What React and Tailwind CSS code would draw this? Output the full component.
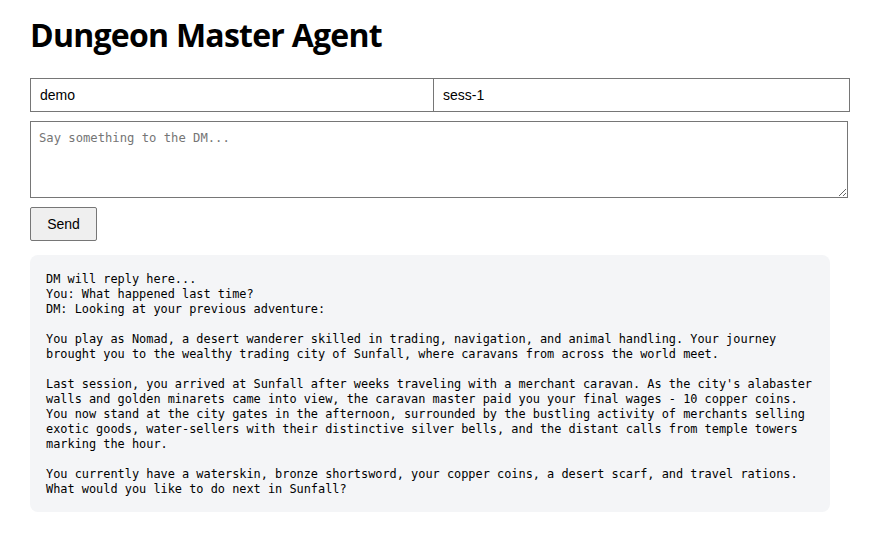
import React, { useState } from "react";

const reply = `DM will reply here...
You: What happened last time?
DM: Looking at your previous adventure:

You play as Nomad, a desert wanderer skilled in trading, navigation, and animal handling. Your journey
brought you to the wealthy trading city of Sunfall, where caravans from across the world meet.

Last session, you arrived at Sunfall after weeks traveling with a merchant caravan. As the city's alabaster
walls and golden minarets came into view, the caravan master paid you your final wages - 10 copper coins.
You now stand at the city gates in the afternoon, surrounded by the bustling activity of merchants selling
exotic goods, water-sellers with their distinctive silver bells, and the distant calls from temple towers
marking the hour.

You currently have a waterskin, bronze shortsword, your copper coins, a desert scarf, and travel rations.
What would you like to do next in Sunfall?`;

export default function App() {
  const [user, setUser] = useState("demo");
  const [session, setSession] = useState("sess-1");
  const [msg, setMsg] = useState("");

  return (
    <div className="min-h-[556px] bg-white px-[30px] pt-[17px] text-black font-['Liberation_Sans',Arial,sans-serif]">
      <h1 className="text-[32px] font-bold leading-[36px] font-['Open_Sans','Noto_Sans',sans-serif] tracking-[-0.75px]">
        Dungeon Master Agent
      </h1>

      {/* ids */}
      <div className="mt-[25px] flex w-[820px]">
        <input
          value={user}
          onChange={(e) => setUser(e.target.value)}
          className="h-[34px] w-[404px] border border-[#767676] px-[9px] text-[14px] outline-none"
        />
        <input
          value={session}
          onChange={(e) => setSession(e.target.value)}
          className="h-[34px] flex-1 border border-l-0 border-[#767676] px-[9px] text-[14px] outline-none"
        />
      </div>

      <textarea
        value={msg}
        onChange={(e) => setMsg(e.target.value)}
        placeholder="Say something to the DM..."
        className="mt-[9px] block h-[77px] w-[818px] border border-[#767676] px-[8px] pt-[9px] pb-[7px] text-[12.2px] leading-[15px] font-['DejaVu_Sans_Mono',monospace] placeholder:text-[#757575] outline-none"
      />

      <button className="mt-[9px] h-[34px] w-[67px] rounded-[2px] border border-[#767676] bg-[#efefef] text-[14px]">
        Send
      </button>

      <pre className="mt-[14px] w-[800px] rounded-[8px] bg-[#f4f5f7] px-[16px] pt-[17px] pb-[15px] text-[11.9px] leading-[15px] font-['DejaVu_Sans_Mono',monospace] whitespace-pre-wrap">
        {reply}
      </pre>
    </div>
  );
}
